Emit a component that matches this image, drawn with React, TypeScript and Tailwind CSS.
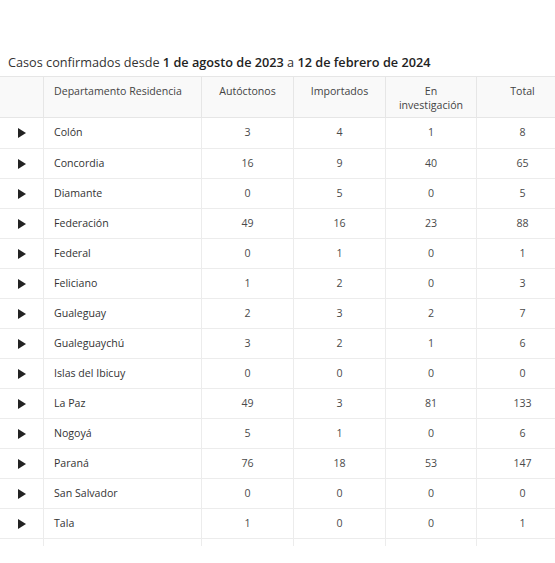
import React from "react";

const rows: [string, number, number, number, number][] = [
  ["Colón", 3, 4, 1, 8],
  ["Concordia", 16, 9, 40, 65],
  ["Diamante", 0, 5, 0, 5],
  ["Federación", 49, 16, 23, 88],
  ["Federal", 0, 1, 0, 1],
  ["Feliciano", 1, 2, 0, 3],
  ["Gualeguay", 2, 3, 2, 7],
  ["Gualeguaychú", 3, 2, 1, 6],
  ["Islas del Ibicuy", 0, 0, 0, 0],
  ["La Paz", 49, 3, 81, 133],
  ["Nogoyá", 5, 1, 0, 6],
  ["Paraná", 76, 18, 53, 147],
  ["San Salvador", 0, 0, 0, 0],
  ["Tala", 1, 0, 0, 1],
];

const cols = "grid w-[568px] grid-cols-[44px_158px_92px_92px_91px_91px]";

function Tri() {
  return (
    <svg width="8" height="10" viewBox="0 0 8 10">
      <polygon points="0,0 8,5 0,10" fill="#222" />
    </svg>
  );
}

export default function App() {
  return (
    <div className="w-[555px] h-[563px] bg-white overflow-hidden" style={{ fontFamily: '"Open Sans", sans-serif' }}>
      <div className="pt-[53px] pl-[8px] text-[12.7px] leading-[18px] text-[#333]">
        Casos confirmados desde <span className="font-semibold text-[#222]">1 de agosto de 2023</span> a <span className="font-semibold text-[#222]">12 de febrero de 2024</span>
      </div>
      <div className="mt-[5px] h-[470px] overflow-hidden">
        <div className={`${cols} h-[42px] bg-[#f9f9f9] border-t border-b border-[#e6e6e6] text-[10.6px] leading-[14px] text-[#444]`}>
          <div className="border-r border-[#e6e6e6]" />
          <div className="border-r border-[#e6e6e6] pl-[10px] pt-[7px]">Departamento Residencia</div>
          <div className="border-r border-[#e6e6e6] text-center pt-[7px]">Autóctonos</div>
          <div className="border-r border-[#e6e6e6] text-center pt-[7px]">Importados</div>
          <div className="border-r border-[#e6e6e6] text-center pt-[7px]">En<br />investigación</div>
          <div className="text-center pt-[7px]">Total</div>
        </div>
        {rows.map((r, i) => (
          <div key={r[0]} className={`${cols} ${i === 0 ? "h-[31px]" : "h-[30px]"} border-b border-[#ececec] text-[10.6px] text-[#4a4a4a] items-stretch`}>
            <div className="border-r border-[#ececec] flex items-center justify-center"><Tri /></div>
            <div className="border-r border-[#ececec] flex items-center pl-[10px] text-[#333]">{r[0]}</div>
            <div className="border-r border-[#ececec] flex items-center justify-center">{r[1]}</div>
            <div className="border-r border-[#ececec] flex items-center justify-center">{r[2]}</div>
            <div className="border-r border-[#ececec] flex items-center justify-center">{r[3]}</div>
            <div className="flex items-center justify-center">{r[4]}</div>
          </div>
        ))}
        <div className={`${cols} h-[12px]`}>
          <div className="border-r border-[#ececec]" />
          <div className="border-r border-[#ececec]" />
          <div className="border-r border-[#ececec]" />
          <div className="border-r border-[#ececec]" />
          <div className="border-r border-[#ececec]" />
          <div />
        </div>
      </div>
    </div>
  );
}
